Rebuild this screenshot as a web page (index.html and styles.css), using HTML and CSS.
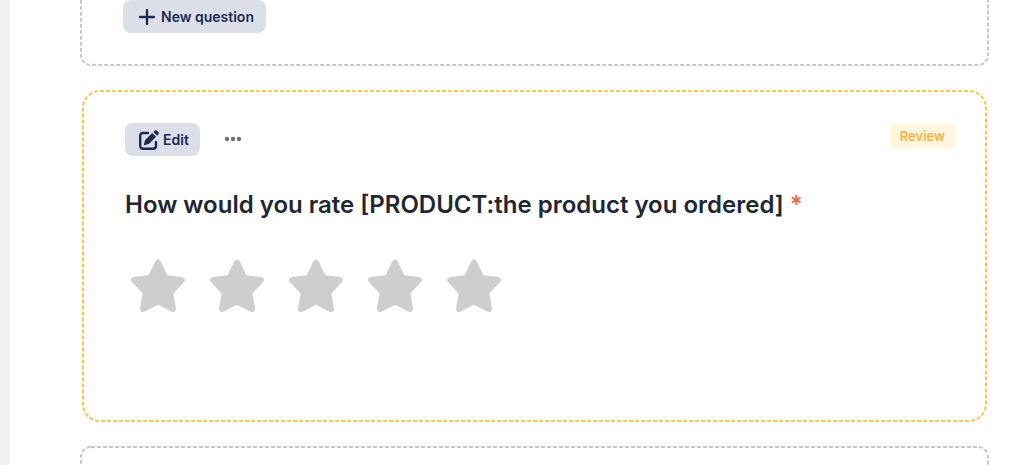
FILE: index.html
```html
<!DOCTYPE html>
<html lang="en">
<head>
<meta charset="utf-8">
<title>Survey editor</title>
<link rel="stylesheet" href="styles.css">
</head>
<body>
<div class="page">
  <aside class="rail"></aside>
  <main class="editor">
    <section class="block block-first">
      <svg class="outline" aria-hidden="true"><rect class="outline-rect"/></svg>
      <button class="btn btn-new" type="button">
        <svg class="icon-plus" viewBox="0 0 16 16" aria-hidden="true"><path d="M8 1v14M1 8h14"/></svg>
        New question
      </button>
    </section>

    <section class="block block-question">
      <svg class="outline outline-active" aria-hidden="true"><rect class="outline-rect"/></svg>
      <header class="toolbar">
        <button class="btn btn-edit" type="button">
          <svg class="icon-edit" viewBox="0 0 20 20" aria-hidden="true">
            <path class="line" d="M9 3H4.200Q1.200 3 1.200 6v9.800q0 3 3 3h9.800q3 0 3-3V12"/>
            <path class="fill" d="M13.300 2.900l3.800 3.800-7.200 7.200-4.800 1.300q-.5.100-.3-.5l1.300-4.600zM14.300 1.900l1-1q1.500-1.400 3 0l.8.8q1.400 1.500 0 3l-1 1z"/>
          </svg>
          Edit
        </button>
        <button class="more" type="button" aria-label="More options">
          <svg class="icon-dots" viewBox="0 0 18 6" aria-hidden="true"><circle cx="3" cy="3" r="2.200"/><circle cx="9" cy="3" r="2.200"/><circle cx="15" cy="3" r="2.200"/></svg>
        </button>
        <span class="badge">Review</span>
      </header>
      <h2 class="title">How would you rate [PRODUCT:the product you ordered] <span class="required">*</span></h2>
      <svg class="defs" aria-hidden="true">
        <symbol id="star" viewBox="0 0 54 54">
          <path d="M24.200 2.400Q27-1.400 29.800 2.400L36.400 16.200 51 18Q55.500 19.200 53.300 22.800L42.400 34.500 45 49.500Q44.600 54.200 40.500 52.700L27 45.800 13.500 52.700Q9.400 54.200 9 49.500L11.600 34.500.7 22.800Q-1.500 19.200 3 18L17.600 16.200z"/>
        </symbol>
      </svg>
      <div class="stars" role="radiogroup" aria-label="Rating">
        <label class="star"><input type="radio" name="rating" value="1" aria-label="1 star"><svg><use href="#star"/></svg></label>
        <label class="star"><input type="radio" name="rating" value="2" aria-label="2 stars"><svg><use href="#star"/></svg></label>
        <label class="star"><input type="radio" name="rating" value="3" aria-label="3 stars"><svg><use href="#star"/></svg></label>
        <label class="star"><input type="radio" name="rating" value="4" aria-label="4 stars"><svg><use href="#star"/></svg></label>
        <label class="star"><input type="radio" name="rating" value="5" aria-label="5 stars"><svg><use href="#star"/></svg></label>
      </div>
    </section>

    <section class="block block-next">
      <svg class="outline" aria-hidden="true"><rect class="outline-rect"/></svg>
    </section>
  </main>
</div>
</body>
</html>
```
FILE: styles.css
```css
* { box-sizing: border-box; }
body {
  margin: 0;
  background: #fff;
  color: #1f2733;
  font-family: Inter, "Liberation Sans", sans-serif;
}
.page { display: flex; height: 100vh; overflow: hidden; }
.rail { flex: none; width: 10px; background: #f0f0ee; }
.editor { flex: 1; padding: 0 35px 0 70px; }

.block { position: relative; }
.block-first { display: flex; padding: 0 43px 33px; }
.block-question { margin: 24px 2px; padding: 33px 32px 109px 43px; }
.block-next { height: 120px; }

/* Dashed frame around each block */
.outline {
  position: absolute;
  inset: 0;
  width: 100%;
  height: 100%;
  pointer-events: none;
}
.outline-rect {
  x: 1px;
  y: 1px;
  width: calc(100% - 2px);
  height: calc(100% - 2px);
  rx: 10px;
  fill: none;
  stroke: #c8c8c8;
  stroke-width: 2px;
  stroke-dasharray: 4 2;
}
.block-first .outline { top: -40px; height: calc(100% + 40px); }
.outline-active .outline-rect { rx: 17px; stroke: #f7c948; }

.btn {
  display: inline-flex;
  align-items: center;
  height: 33px;
  border: 0;
  border-radius: 8px;
  background: #dcdee8;
  color: #1c2950;
  font: 600 14px/20px Inter, "Liberation Sans", sans-serif;
}
.btn-new { padding: 0 12px 0 16px; gap: 6px; }
.btn-edit { padding: 0 11px 0 14px; gap: 4px; }
.icon-plus { width: 16px; height: 16px; fill: none; stroke: #1c2950; stroke-width: 2.3; stroke-linecap: round; }
.icon-edit { width: 20px; height: 20px; }
.icon-edit .line { fill: none; stroke: #1c2950; stroke-width: 2.4; stroke-linecap: round; }
.icon-edit .fill { fill: #1c2950; }

.toolbar { display: flex; align-items: flex-start; }
.more {
  display: flex;
  align-items: center;
  height: 31px;
  margin-left: 16px;
  padding: 0 8px;
  border: 0;
  background: none;
}
.icon-dots { width: 18px; height: 6px; fill: #717171; }
.badge {
  margin-left: auto;
  padding: 3px 10px;
  border-radius: 6px;
  background: #fff6de;
  color: #f2b544;
  font-size: 13px;
  font-weight: 600;
  line-height: 20px;
}

.title { margin: 33px 0 0; font-size: 24px; font-weight: 600; line-height: 32px; }
.required { color: #ef6b4e; }

.defs { display: none; }
.stars { display: flex; gap: 25px; margin: 38px 0 0 6px; }
.star { position: relative; display: block; width: 54px; height: 54px; cursor: pointer; }
.star input { position: absolute; inset: 0; width: 100%; height: 100%; margin: 0; opacity: 0; }
.star svg { display: block; width: 54px; height: 54px; fill: #cecece; }
```
